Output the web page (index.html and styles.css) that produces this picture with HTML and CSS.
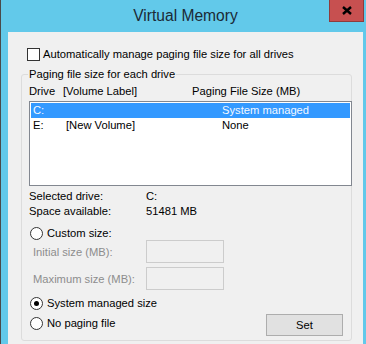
FILE: index.html
```html
<!DOCTYPE html>
<html lang="en">
<head>
    <meta charset="UTF-8">
    <title>Virtual Memory</title>
    <link rel="stylesheet" href="styles.css">
</head>
<body>
<div class="window">
    <div class="titlebar">
        <span></span>
        <div class="title">Virtual Memory</div>
        <div class="close">
            <svg width="10" height="9" viewBox="0 0 10 9">
                <path d="M1 1 L9 8 M9 1 L1 8" stroke="#000" stroke-width="2.4" fill="none"/>
            </svg>
        </div>
    </div>
    <div class="content">
        <div class="checkRow"><span class="checkbox"></span>Automatically manage paging file size for all drives</div>

        <div class="group">
            <div class="legend">Paging file size for each drive</div>
            <div class="listHead">
                <span>Drive</span><span>[Volume Label]</span><span>Paging File Size (MB)</span>
            </div>
            <div class="list">
                <div class="row selected"><span>C:</span><span></span><span>System managed</span></div>
                <div class="row"><span>E:</span><span>[New Volume]</span><span>None</span></div>
            </div>

            <div class="info">
                <span>Selected drive:</span><span>C:</span>
                <span>Space available:</span><span>51481 MB</span>
            </div>

            <div class="radioRow"><span class="radio"></span>Custom size:</div>
            <div class="sizeFields">
                <span class="disabled">Initial size (MB):</span><span class="textbox"></span>
                <span class="disabled">Maximum size (MB):</span><span class="textbox"></span>
            </div>

            <div class="bottom">
                <div class="radios">
                    <div class="radioRow"><span class="radio checked"></span>System managed size</div>
                    <div class="radioRow"><span class="radio"></span>No paging file</div>
                </div>
                <div class="button">Set</div>
            </div>
        </div>
    </div>
</div>
</body>
</html>
```

FILE: styles.css
```css
body {
    margin: 0;
    font-family: "Liberation Sans", Arial, sans-serif;
    font-size: 11.2px;
    color: #000;
}

.window {
    box-sizing: border-box;
    width: 366px;
    height: 344px;
    background: #62c9ea;
    border-left: 1px solid #4a4a4a;
    padding: 0 3px 0 7px;
    display: flex;
    flex-direction: column;
}

.titlebar {
    height: 32px;
    display: grid;
    grid-template-columns: 1fr auto 1fr;
    align-items: start;
}
.title {
    font-size: 15.6px;
    line-height: 31px;
    color: #1b2a36;
}
.close {
    justify-self: end;
    box-sizing: border-box;
    width: 35px;
    height: 22px;
    margin-right: -1px;
    background: #c75050;
    border: 1px solid #8e3c3c;
    border-top: none;
    display: flex;
    align-items: center;
    justify-content: center;
}

.content {
    flex: 1;
    background: #f0f0f0;
    padding-top: 14px;
}

.checkRow {
    display: flex;
    align-items: center;
    height: 16px;
    padding-left: 19px;
}
.checkbox {
    box-sizing: border-box;
    width: 13px;
    height: 13px;
    border: 1px solid #333;
    background: #fff;
    margin-right: 3px;
}

.group {
    margin: 12px 11px 0 13px;
    border: 1px solid #dcdcdc;
    border-radius: 3px;
    padding: 0 0 4px 7px;
}
.legend {
    width: fit-content;
    margin: -9px 0 0 -1px;
    padding: 0 1px;
    line-height: 16px;
    background: #f0f0f0;
}

.listHead {
    margin-top: 1px;
    line-height: 16px;
    display: grid;
    grid-template-columns: 34px 129px auto;
}

.list {
    box-sizing: border-box;
    height: 85px;
    margin: 2px -1px 0 0;
    border: 1px solid #828790;
    background: #fff;
    padding: 1px;
}
.row {
    height: 15px;
    line-height: 15px;
    padding-left: 2px;
    display: grid;
    grid-template-columns: 33px 156px auto;
}
.row.selected {
    background: #3399ff;
    color: #f4f8ff;
}

.info {
    margin-top: 3px;
    line-height: 15px;
    display: grid;
    grid-template-columns: 117px auto;
}

.radioRow {
    display: flex;
    align-items: center;
    height: 16px;
    padding-left: 1px;
}
.info + .radioRow {
    margin-top: 6px;
}
.radio {
    box-sizing: border-box;
    width: 13px;
    height: 13px;
    border: 1px solid #333;
    border-radius: 50%;
    background: #fff;
    margin-right: 4px;
    display: flex;
    align-items: center;
    justify-content: center;
}
.radio.checked::after {
    content: "";
    width: 5px;
    height: 5px;
    border-radius: 50%;
    background: #000;
}

.sizeFields {
    margin-top: -1px;
    padding-left: 4px;
    display: grid;
    grid-template-columns: 113px 78px;
    row-gap: 4px;
    align-items: center;
}
.disabled {
    color: #8d8d8d;
}
.textbox {
    box-sizing: border-box;
    height: 23px;
    border: 1px solid #cccccc;
}

.bottom {
    margin-top: 5px;
    padding-right: 8px;
    display: flex;
    justify-content: space-between;
    align-items: flex-end;
}
.radios {
    display: flex;
    flex-direction: column;
    gap: 4px;
    padding-bottom: 5px;
}
.button {
    box-sizing: border-box;
    width: 77px;
    height: 22px;
    line-height: 20px;
    text-align: center;
    background: #e1e1e1;
    border: 1px solid #adadad;
}
```
